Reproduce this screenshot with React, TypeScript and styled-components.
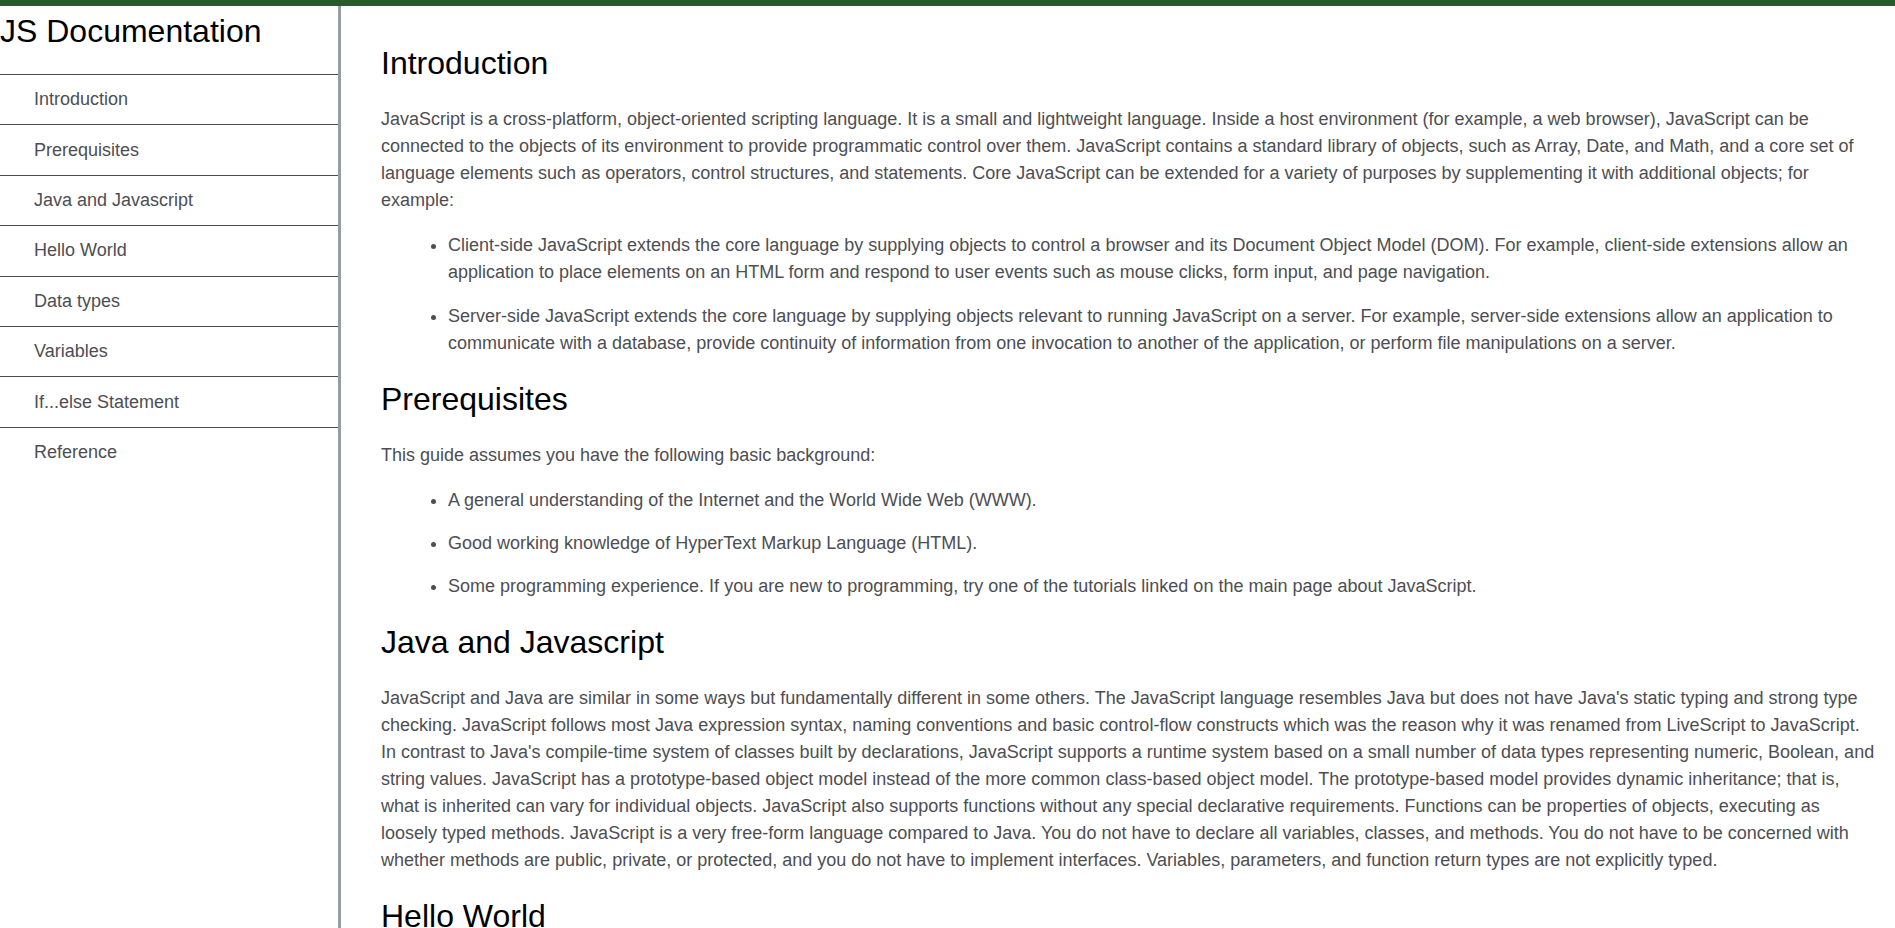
import React from "react";
import styled, { createGlobalStyle } from "styled-components";

const GlobalStyle = createGlobalStyle`
  html, body {
    margin: 0;
    padding: 0;
    background: #ffffff;
    font-family: "Liberation Sans", Arial, sans-serif;
  }
  * { box-sizing: border-box; }
`;

const Page = styled.div`
  border-top: 6px solid #285a2c;
  display: flex;
  align-items: stretch;
  min-height: 100vh;
`;

const Sidebar = styled.nav`
  flex: 0 0 341px;
  width: 341px;
  border-right: 3px solid #959f9f;
  min-height: calc(100vh - 6px);
`;

const SideHeader = styled.header`
  height: 68px;
  padding-top: 7px;
`;

const Title = styled.h1`
  margin: 0;
  font-size: 32px;
  font-weight: 400;
  line-height: normal;
  color: #000000;
`;

const NavList = styled.ul`
  list-style: none;
  margin: 0;
  padding: 0;
`;

const NavItem = styled.li`
  border-top: 1px solid #4b4b4b;
`;

const NavLink = styled.a`
  display: flex;
  align-items: center;
  height: 49.4px;
  padding-left: 34px;
  font-size: 18px;
  color: #4d4e53;
  text-decoration: none;
`;

const Main = styled.main`
  flex: 1;
  min-width: 0;
  padding: 15px 20px 40px 40px;
`;

const Section = styled.section``;

const SectionTitle = styled.h2`
  margin: 24px 0;
  font-size: 32px;
  font-weight: 400;
  line-height: normal;
  color: #000000;
`;

const Para = styled.p`
  margin: 24px 0 18px;
  font-size: 18px;
  line-height: 27px;
  color: #4d4e53;
`;

const List = styled.ul<{ $gap: number }>`
  margin: 18px 0 23px;
  padding-left: 67px;
  font-size: 18px;
  line-height: 27px;
  color: #4d4e53;

  li {
    margin-bottom: ${(p) => p.$gap}px;
  }
  li:last-child {
    margin-bottom: 0;
  }
`;

const Code = styled.pre`
  margin: 20px 0;
  padding: 14px 20px;
  background: #f2f2f2;
  border-radius: 4px;
  font-family: "Liberation Mono", monospace;
  font-size: 15px;
  line-height: 22px;
  color: #333333;
`;

const navItems = [
  "Introduction",
  "Prerequisites",
  "Java and Javascript",
  "Hello World",
  "Data types",
  "Variables",
  "If...else Statement",
  "Reference",
];

const slug = (s: string) => s.replace(/[^A-Za-z]+/g, "_");

export default function App() {
  return (
    <>
      <GlobalStyle />
      <Page>
        <Sidebar id="navbar">
          <SideHeader>
            <Title>JS Documentation</Title>
          </SideHeader>
          <NavList>
            {navItems.map((item) => (
              <NavItem key={item}>
                <NavLink href={`#${slug(item)}`}>{item}</NavLink>
              </NavItem>
            ))}
          </NavList>
        </Sidebar>
        <Main id="main-doc">
          <Section id="Introduction">
            <SectionTitle>Introduction</SectionTitle>
            <Para>
              JavaScript is a cross-platform, object-oriented scripting language. It is a small and lightweight
              language. Inside a host environment (for example, a web browser), JavaScript can be connected to the
              objects of its environment to provide programmatic control over them. JavaScript contains a standard
              library of objects, such as Array, Date, and Math, and a core set of language elements such as
              operators, control structures, and statements. Core JavaScript can be extended for a variety of purposes
              by supplementing it with additional objects; for example:
            </Para>
            <List $gap={17}>
              <li>
                Client-side JavaScript extends the core language by supplying objects to control a browser and its
                Document Object Model (DOM). For example, client-side extensions allow an application to place elements
                on an HTML form and respond to user events such as mouse clicks, form input, and page navigation.
              </li>
              <li>
                Server-side JavaScript extends the core language by supplying objects relevant to running JavaScript on
                a server. For example, server-side extensions allow an application to communicate with a database,
                provide continuity of information from one invocation to another of the application, or perform file
                manipulations on a server.
              </li>
            </List>
          </Section>
          <Section id="Prerequisites">
            <SectionTitle>Prerequisites</SectionTitle>
            <Para>This guide assumes you have the following basic background:</Para>
            <List $gap={16}>
              <li>A general understanding of the Internet and the World Wide Web (WWW).</li>
              <li>Good working knowledge of HyperText Markup Language (HTML).</li>
              <li>
                Some programming experience. If you are new to programming, try one of the tutorials linked on the main
                page about JavaScript.
              </li>
            </List>
          </Section>
          <Section id="Java_and_Javascript">
            <SectionTitle>Java and Javascript</SectionTitle>
            <Para>
              JavaScript and Java are similar in some ways but fundamentally different in some others. The JavaScript
              language resembles Java but does not have Java's static typing and strong type checking. JavaScript
              follows most Java expression syntax, naming conventions and basic control-flow constructs which was the
              reason why it was renamed from LiveScript to JavaScript. In contrast to Java's compile-time system of
              classes built by declarations, JavaScript supports a runtime system based on a small number of data types
              representing numeric, Boolean, and string values. JavaScript has a prototype-based object model instead of
              the more common class-based object model. The prototype-based model provides dynamic inheritance; that
              is, what is inherited can vary for individual objects. JavaScript also supports functions without any
              special declarative requirements. Functions can be properties of objects, executing as loosely typed
              methods. JavaScript is a very free-form language compared to Java. You do not have to declare all
              variables, classes, and methods. You do not have to be concerned with whether methods are public,
              private, or protected, and you do not have to implement interfaces. Variables, parameters, and function
              return types are not explicitly typed.
            </Para>
          </Section>
          <Section id="Hello_World">
            <SectionTitle>Hello World</SectionTitle>
            <Para>
              To get started with writing JavaScript, open the Scratchpad and write your first "Hello world"
              JavaScript code:
            </Para>
            <Code>{`function greetMe(yourName) { alert("Hello " + yourName); }
greetMe("World");`}</Code>
            <Para>Select the code in the pad and hit Ctrl+R to watch it unfold in your browser!</Para>
          </Section>
          <Section id="Data_types">
            <SectionTitle>Data types</SectionTitle>
            <Para>The latest ECMAScript standard defines seven data types:</Para>
            <List $gap={16}>
              <li>Boolean. true and false.</li>
              <li>null. A special keyword denoting a null value.</li>
              <li>undefined. A top-level property whose value is undefined.</li>
              <li>Number. 42 or 3.14159.</li>
              <li>String. "Howdy"</li>
              <li>Symbol. A data type whose instances are unique and immutable.</li>
              <li>and Object</li>
            </List>
          </Section>
          <Section id="Variables">
            <SectionTitle>Variables</SectionTitle>
            <Para>
              You use variables as symbolic names for values in your application. The names of variables, called
              identifiers, conform to certain rules.
            </Para>
          </Section>
          <Section id="If_else_Statement">
            <SectionTitle>If...else Statement</SectionTitle>
            <Para>
              Use the if statement to execute a statement if a logical condition is true. Use the optional else clause
              to execute a statement if the condition is false.
            </Para>
          </Section>
          <Section id="Reference">
            <SectionTitle>Reference</SectionTitle>
            <List $gap={16}>
              <li>All the documentation in this page is taken from MDN</li>
            </List>
          </Section>
        </Main>
      </Page>
    </>
  );
}
